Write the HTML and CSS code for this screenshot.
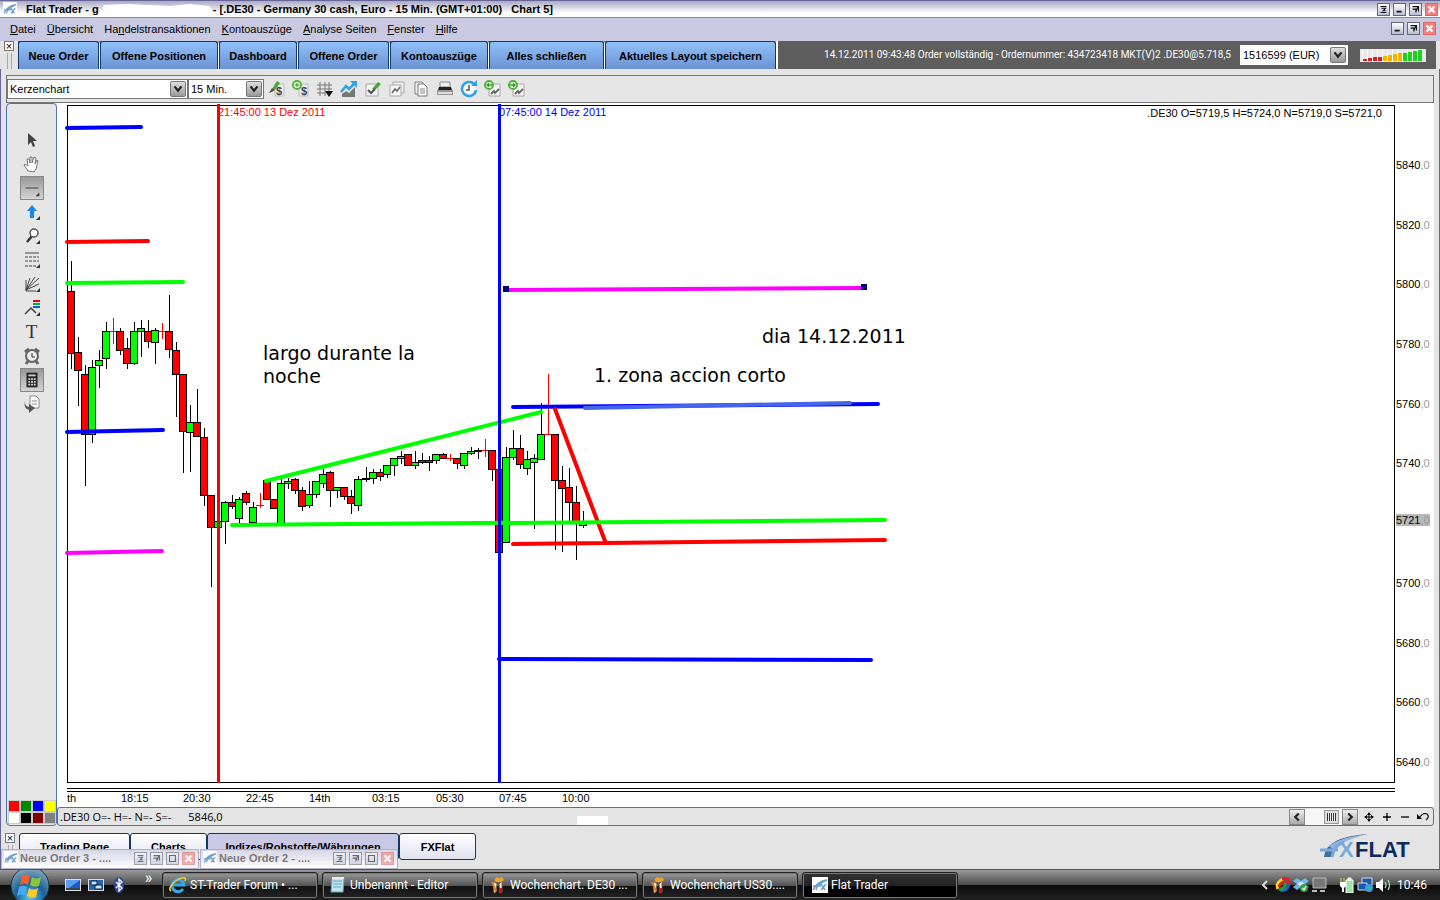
FILE: index.html
```html
<!DOCTYPE html>
<html lang="de">
<head>
    <meta charset="UTF-8">
    <title>Flat Trader</title>
    <link rel="stylesheet" href="styles.css">
</head>
<body>
    <svg class="sprite" aria-hidden="true">
        <symbol id="i-swoosh" viewBox="0 0 16 16"><path d="M1 13Q5 4 15 3Q10 5 8 7Q5 8 4 13M1 9h8M9 13l5-6M9 7l4 6" fill="none" stroke="#6ba0cc" stroke-width="1.5"/></symbol>
        <symbol id="i-down" viewBox="0 0 16 16"><path d="M4 5l4 5l4-5" fill="none" stroke="#222" stroke-width="2.5"/></symbol>
        <symbol id="i-shade" viewBox="0 0 13 13"><path d="M3 3h7M3 10h7M4 5h5L6 8h3" fill="none" stroke="#111" stroke-width="1.2"/></symbol>
        <symbol id="i-min" viewBox="0 0 13 13"><path d="M3 9h6" stroke="#111" stroke-width="2"/></symbol>
        <symbol id="i-rest" viewBox="0 0 13 13"><path d="M3 3h7v6M3 6h4v4M9 4L7 9" fill="none" stroke="#111" stroke-width="1.4"/></symbol>
        <symbol id="i-max" viewBox="0 0 13 13"><path d="M3 3h7v7H3z" fill="none" stroke="#111" stroke-width="1.3"/></symbol>
        <symbol id="i-x" viewBox="0 0 13 13"><path d="M3 3l7 7M10 3l-7 7" stroke="#fff" stroke-width="2.6"/></symbol>
        <symbol id="i-page" viewBox="0 0 18 18"><path d="M5 4h11v12H5z" fill="#f4f4f4" stroke="#aaa"/><path d="M7 14l3-3l1 2l4-4" stroke="#666" stroke-width="1.8" fill="none"/><circle cx="5" cy="5" r="4" fill="#fff" stroke="#4fb53a" stroke-width="2"/></symbol>
        <symbol id="i-book" viewBox="0 0 18 18"><path d="M4 5l4 3l-1 8l-2 1zM13 5l-3 3l1 9l2-1z" fill="#f2f2f2" stroke="#8a5a30"/><path d="M5 4l3-3l2 1l3-1l2 3l-3 2H7z" fill="#f0a030"/><path d="M3 6l4 9" stroke="#d87a28" stroke-width="2"/><path d="M10 12h3v5h-3z" fill="#d01818"/></symbol>
    </svg>

    <header class="titlebar">
        <svg class="app-icon"><use href="#i-swoosh"/></svg>
        <div class="title">
            <span>Flat Trader - g</span>
            <svg class="smudge" viewBox="0 0 114 18"><path d="M4 5L28 4L72 6L90 4L110 6L113 10L110 17L72 16L60 18L30 17L28 14L4 15z" fill="#fff"/></svg>
            <span>- [.DE30 - Germany 30 cash, Euro - 15 Min. (GMT+01:00) &nbsp; Chart 5]</span>
        </div>
        <div class="win-buttons">
            <button aria-label="Einrollen"><svg><use href="#i-shade"/></svg></button>
            <button aria-label="Minimieren"><svg><use href="#i-min"/></svg></button>
            <button aria-label="Wiederherstellen"><svg><use href="#i-rest"/></svg></button>
            <button class="close" aria-label="Beenden"><svg><use href="#i-x"/></svg></button>
        </div>
    </header>

    <nav class="menubar">
        <a href="#"><u>D</u>atei</a>
        <a href="#"><u>Ü</u>bersicht</a>
        <a href="#">Ha<u>n</u>delstransaktionen</a>
        <a href="#"><u>K</u>ontoauszüge</a>
        <a href="#"><u>A</u>nalyse Seiten</a>
        <a href="#"><u>F</u>enster</a>
        <a href="#"><u>H</u>ilfe</a>
        <div class="win-buttons">
            <button aria-label="Chart minimieren"><svg><use href="#i-min"/></svg></button>
            <button aria-label="Chart wiederherstellen"><svg><use href="#i-rest"/></svg></button>
            <button class="close" aria-label="Chart schließen"><svg><use href="#i-x"/></svg></button>
        </div>
    </nav>

    <div class="orderbar">
        <div class="grip"><button class="grip-x" aria-label="Leiste schließen">×</button><i></i></div>
        <div class="order-buttons">
            <button class="w-81">Neue Order</button>
            <button class="w-118">Offene Positionen</button>
            <button class="w-78">Dashboard</button>
            <button class="w-91">Offene Order</button>
            <button class="w-98">Kontoauszüge</button>
            <button class="w-115">Alles schließen</button>
            <button class="w-171">Aktuelles Layout speichern</button>
        </div>
        <p class="order-msg">14.12.2011 09:43:48 Order vollständig - Ordernummer: 434723418 MKT(V)2 .DE30@5.718,5</p>
        <div class="select account">
            <select aria-label="Konto"><option>1516599 (EUR)</option></select>
            <svg><use href="#i-down"/></svg>
        </div>
        <svg class="signal" id="signal" viewBox="0 0 66 13"></svg>
    </div>

    <div class="workspace">
        <div class="toolbar">
            <div class="select type">
                <select aria-label="Charttyp"><option>Kerzenchart</option></select>
                <svg><use href="#i-down"/></svg>
            </div>
            <div class="select period">
                <select aria-label="Periode"><option>15 Min.</option></select>
                <svg><use href="#i-down"/></svg>
            </div>
            <div class="tools">
                <button aria-label="Kauf zeichnen"><svg viewBox="0 0 18 18"><path d="M7 4h9v12H7z" fill="#f0f0f0" stroke="#bbb"/><path d="M4 9l5-8l3 2l-5 7z" fill="#49a83a"/><path d="M1 13l3-5l3 2l-3 2z" fill="#555"/><text x="8" y="15" class="dollar">$</text></svg></button>
                <button aria-label="Order hinzufügen"><svg viewBox="0 0 18 18"><path d="M7 4h9v12H7z" fill="#f0f0f0" stroke="#bbb"/><text x="9" y="15" class="dollar">$</text><circle cx="5" cy="5" r="4" fill="#fff" stroke="#4fb53a" stroke-width="2"/><path d="M5 3v4M3 5h4" stroke="#4fb53a" stroke-width="1.5"/></svg></button>
                <button aria-label="Raster"><svg viewBox="0 0 18 18"><path d="M4 2v14M9 2v14M13 2v9M1 5h15M1 9h15M1 13h9" stroke="#777"/><path d="M9 11h8l-4 6z" fill="#111"/></svg></button>
                <button aria-label="Indikator"><svg viewBox="0 0 18 18"><path d="M2 17v-3l4-3l3 2l6-6v10z" fill="#777"/><path d="M1 12l5-6l3 3l5-5" fill="none" stroke="#2ea2e6" stroke-width="2.5"/><path d="M10 1h7v7z" fill="#2ea2e6"/></svg></button>
                <button aria-label="Bearbeiten"><svg viewBox="0 0 18 18"><path d="M2 4h12v12H2z" fill="#f4f4f4" stroke="#aaa"/><path d="M8 9l6-7l3 2l-6 6z" fill="#3fa535"/><path d="M4 10l3 3l4-4" fill="none" stroke="#555" stroke-width="2"/></svg></button>
                <button aria-label="Charts kopieren"><svg viewBox="0 0 18 18"><path d="M5 2h11v11H5z" fill="#eee" stroke="#aaa"/><path d="M2 5h11v11H2z" fill="#f6f6f6" stroke="#aaa"/><path d="M4 13l3-4l2 2l3-4" fill="none" stroke="#666" stroke-width="1.5"/></svg></button>
                <button aria-label="Kopieren"><svg viewBox="0 0 18 18"><path d="M3 2h7l2 2v10H3z" fill="#eee" stroke="#888"/><path d="M6 4h6l3 3v9H6z" fill="#fff" stroke="#777"/><path d="M8 9h5M8 11h5M8 13h5" stroke="#888"/></svg></button>
                <button aria-label="Drucken"><svg viewBox="0 0 18 18"><path d="M4 2h10v5H4z" fill="#eee" stroke="#888"/><path d="M3 7h12l1 3H2z" fill="#222"/><path d="M1 10h16v5H1z" fill="#999"/><path d="M2 12h14v2H2z" fill="#ddd"/></svg></button>
                <button aria-label="Aktualisieren"><svg viewBox="0 0 18 18"><path d="M14 4A7 7 0 1 0 16 10" fill="#fff" stroke="#2ea2e6" stroke-width="2.5"/><path d="M11 6h6V0z" fill="#2ea2e6"/><path d="M9 5v5H6" fill="none" stroke="#555" stroke-width="1.5"/></svg></button>
                <button aria-label="Zurück"><svg viewBox="0 0 18 18"><use href="#i-page"/><path d="M8 5H3M5 3L3 5l2 2" fill="none" stroke="#3a9a2a" stroke-width="1.3"/></svg></button>
                <button aria-label="Vor"><svg viewBox="0 0 18 18"><use href="#i-page"/><path d="M2 5h5M5 3l2 2l-2 2" fill="none" stroke="#3a9a2a" stroke-width="1.3"/></svg></button>
            </div>
        </div>

        <div class="chart-area">
            <aside class="sidebar">
                <button aria-label="Zeiger"><svg viewBox="0 0 24 24"><path d="M8 5v12l3-3l2 5l2-1l-2-5h4z" fill="#444"/></svg></button>
                <button aria-label="Hand"><svg viewBox="0 0 24 24"><path d="M8 19l-4-6l1-1l3 2l-1-7l2 0l1 4V5h2v6l2-6l2 1l-1 6l2-4l1 1l-2 8l-2 3z" fill="#fff" stroke="#777"/></svg></button>
                <button class="on" aria-label="Linie"><svg viewBox="0 0 24 24"><path d="M5 12h14" stroke="#333"/><path d="M20 17v4h-4z" fill="#333"/></svg></button>
                <button aria-label="Pfeil"><svg viewBox="0 0 24 24"><path d="M12 5l5 6h-3v7h-4v-7H7z" fill="#1787e8"/><path d="M20 16v4h-4z" fill="#333"/></svg></button>
                <button aria-label="Lupe"><svg viewBox="0 0 24 24"><path d="M12 12l-5 6" stroke="#333" stroke-width="2.5"/><circle cx="14" cy="9" r="4" fill="#fff" stroke="#555" stroke-width="1.5"/><path d="M20 16v4h-4z" fill="#333"/></svg></button>
                <button aria-label="Fibonacci"><svg viewBox="0 0 24 24"><path d="M5 5h14" stroke="#444"/><path d="M5 9h14M5 13h14M5 18h12" stroke="#444" stroke-dasharray="3 1"/><path d="M20 16v4h-4z" fill="#333"/></svg></button>
                <button aria-label="Fächer"><svg viewBox="0 0 24 24"><path d="M6 8v11h10M6 18L10 6M6 18L15 5M6 18L19 6M6 18L19 12" fill="none" stroke="#444"/><path d="M20 16v4h-4z" fill="#333"/></svg></button>
                <button aria-label="Muster"><svg viewBox="0 0 24 24"><path d="M5 18l6-6l5 5" fill="none" stroke="#444" stroke-width="1.5"/><path d="M13 4h7v2h-7z" fill="#e00"/><path d="M13 7h7v2h-7z" fill="#1b9a50"/><path d="M13 10h7v2h-7z" fill="#06c"/><path d="M20 16v4h-4z" fill="#333"/></svg></button>
                <button class="text-tool">T</button>
                <button aria-label="Wecker"><svg viewBox="0 0 24 24"><circle cx="12" cy="12" r="6" fill="#eee" stroke="#666" stroke-width="2"/><path d="M5 8l4-3M19 8l-4-3M8 17l-2 3M16 17l2 3" stroke="#666" stroke-width="3"/><path d="M12 9v4h3" fill="none" stroke="#333"/></svg></button>
                <button class="on" aria-label="Rechner"><svg viewBox="0 0 24 24"><path d="M6 4h12v16H6z" fill="#222"/><path d="M8 6h8v2H8z" fill="#ccc"/><path d="M8 11h8M8 14h8M8 17h8" stroke="#ddd" stroke-width="2" stroke-dasharray="2 1"/></svg></button>
                <button aria-label="Export"><svg viewBox="0 0 24 24"><path d="M10 4h6l3 3v9h-9z" fill="#fff" stroke="#888"/><path d="M12 9h5M12 12h5" stroke="#888"/><path d="M5 9q-1 5 4 6v-3l6 4l-6 5v-3q-6-2-4-9z" fill="#555"/></svg></button>
                <div class="swatches">
                    <button class="c-red" aria-label="Rot"></button><button class="c-green" aria-label="Grün"></button><button class="c-blue" aria-label="Blau"></button><button class="c-yellow" aria-label="Gelb"></button>
                    <button class="c-white" aria-label="Weiß"></button><button class="c-black" aria-label="Schwarz"></button><button class="c-dark" aria-label="Dunkelrot"></button><button class="c-grey" aria-label="Grau"></button>
                </div>
            </aside>

            <main class="chart">
                <div class="plot-col">
                    <div class="plot"><span class="ohlc">.DE30 O=5719,5 H=5724,0 N=5719,0 S=5721,0</span></div>
                    <div class="splitter"></div>
                    <div class="times"></div>
                </div>
                <div class="prices" id="prices">
                    <span class="current">5721<i>,0</i></span>
                </div>
                <!-- Zeichenebene: Kerzen, Linien und Notizen -->
                <svg class="drawing">
                    <g transform="translate(-57 -103)">
                        <g id="candles" shape-rendering="crispEdges"></g>
                        <g class="lines">
                            <path d="M67 128L141 127M67 432L163 430M513 407L878 404M499 659L871 660" stroke="#00f"/>
                            <path d="M585 408L850 403" stroke="#4466ec"/>
                            <path d="M67 242L148 241M513 544L885 540M555 409L605 541" stroke="#f00"/>
                            <path d="M67 283L183 282M232 525L885 520M266 481L541 412" stroke="#0f0"/>
                            <path d="M67 553L162 551M506 290L864 288" stroke="#f0f"/>
                        </g>
                        <path d="M503 286h6v6h-6zM861 284h6v6h-6z" fill="#000080"/>
                        <path d="M217 104h3v679h-3z" fill="#f00"/>
                        <path d="M498 104h3v679h-3z" fill="#00f"/>
                        <text x="218" y="116" fill="#f00">21:45:00 13 Dez 2011</text>
                        <text x="499" y="116" fill="#00f">07:45:00 14 Dez 2011</text>
                        <g class="note">
                            <text x="263" y="360">largo durante la</text>
                            <text x="263" y="383">noche</text>
                            <text x="762" y="343">dia 14.12.2011</text>
                            <text x="594" y="382">1. zona accion corto</text>
                        </g>
                        <g id="times"></g>
                    </g>
                </svg>
            </main>

            <div class="statusbar">
                <span class="status-text">.DE30 O=- H=- N=- S=-</span>
                <span class="status-text">5846,0</span>
                <i class="patch"></i>
                <div class="scroller">
                    <button class="sb" aria-label="Links"><svg viewBox="0 0 16 16"><path d="M10 4L6 8l4 4" fill="none" stroke="#222" stroke-width="2.5"/></svg></button>
                    <span class="track"><i></i></span>
                    <button class="sb" aria-label="Rechts"><svg viewBox="0 0 16 16"><path d="M6 4l4 4l-4 4" fill="none" stroke="#222" stroke-width="2.5"/></svg></button>
                </div>
                <div class="zoomers">
                    <button aria-label="Verschieben"><svg viewBox="0 0 12 12"><path d="M6 2v8M2 6h8" stroke="#000"/><path d="M6 1l2 3H4zM6 11l2-3H4zM1 6l3-2v4zM11 6L8 4v4z"/></svg></button>
                    <button aria-label="Vergrößern"><svg viewBox="0 0 12 12"><path d="M6 2v8M2 6h8" stroke="#000" stroke-width="1.3"/></svg></button>
                    <button aria-label="Verkleinern"><svg viewBox="0 0 12 12"><path d="M2 6h8" stroke="#000" stroke-width="1.3"/></svg></button>
                    <button aria-label="Zurücksetzen"><svg viewBox="0 0 12 12"><path d="M2 7Q6 1 10 3Q13 6 9 9" fill="none" stroke="#000" stroke-width="1.2"/><path d="M0 3v5h5z"/></svg></button>
                </div>
            </div>
        </div>
    </div>

    <footer class="pages">
        <div class="grip"><button class="grip-x" aria-label="Leiste schließen">×</button><i></i></div>
        <button class="page w-111">Trading Page</button>
        <button class="page w-77">Charts</button>
        <button class="page active w-192">Indizes/Rohstoffe/Währungen</button>
        <button class="page w-77">FXFlat</button>
        <svg class="logo" viewBox="0 0 96 28">
            <path d="M5 24Q6 4 49 1Q19 6 12 24z" fill="#3f6f9f"/>
            <path d="M10 13Q22 4 49 1Q24 7 14 16z" fill="#8fb6e2"/>
            <path d="M1 17h18M13 24Q15 12 25 9" fill="none" stroke="#7aa9dc" stroke-width="3"/>
            <text x="20" y="24" fill="#7aa9dc">X</text>
            <text x="36" y="24" fill="#0b2c5c">FLAT</text>
        </svg>
        <div class="minimized">
            <div class="mini w-198"><svg class="app-icon"><use href="#i-swoosh"/></svg><span>Neue Order 3 - ....</span>
                <div class="win-buttons"><button aria-label="Einrollen"><svg><use href="#i-shade"/></svg></button><button aria-label="Wiederherstellen"><svg><use href="#i-rest"/></svg></button><button aria-label="Maximieren"><svg><use href="#i-max"/></svg></button><button class="close" aria-label="Schließen"><svg><use href="#i-x"/></svg></button></div>
            </div>
            <div class="mini w-198"><svg class="app-icon"><use href="#i-swoosh"/></svg><span>Neue Order 2 - ....</span>
                <div class="win-buttons"><button aria-label="Einrollen"><svg><use href="#i-shade"/></svg></button><button aria-label="Wiederherstellen"><svg><use href="#i-rest"/></svg></button><button aria-label="Maximieren"><svg><use href="#i-max"/></svg></button><button class="close" aria-label="Schließen"><svg><use href="#i-x"/></svg></button></div>
            </div>
        </div>
    </footer>

    <div class="taskbar">
        <button class="start" aria-label="Start"><svg viewBox="0 0 40 32">
            <defs><radialGradient id="orb" cx="50%" cy="80%" r="75%"><stop offset="0" stop-color="#4fd0f0"/><stop offset=".5" stop-color="#1b5f96"/><stop offset="1" stop-color="#7fa4bc"/></radialGradient></defs>
            <circle cx="20" cy="16" r="19" fill="url(#orb)" stroke="#133" />
            <path d="M12 6q4-3 8 0l-2 9q-4-3-8 0z" fill="#f0602c"/><path d="M22 7q4 3 9 0l-2 9q-5 2-9-1z" fill="#8cc63e"/>
            <path d="M9 17q4-3 8 0l-2 9q-4-3-8 0z" fill="#4aa8ec"/><path d="M19 18q4 3 9 0l-2 9q-5 2-9-1z" fill="#fcc92e"/>
        </svg></button>
        <div class="quick">
            <button aria-label="Desktop"><svg viewBox="0 0 16 16"><path d="M0 2h16v12H0z" fill="#ddd"/><path d="M1 3h14v8H1z" fill="#1c58c8"/><path d="M1 3h14L4 11H1z" fill="#5a9cf0"/><path d="M1 11h14v2H1z" fill="#345"/></svg></button>
            <button aria-label="Fenster wechseln"><svg viewBox="0 0 16 16"><path d="M0 2h16v12H0z" fill="#ddd"/><path d="M1 3h14v10H1z" fill="#2468b0"/><path d="M3 4h6v4H3zM7 8h7v4H7z" fill="#bfe0ff" stroke="#123"/></svg></button>
            <button aria-label="Bluetooth"><svg viewBox="0 0 16 16"><ellipse cx="8" cy="8" rx="5" ry="8" fill="#2a4a9c"/><path d="M5 5l6 6l-3 3V2l3 3l-6 6" fill="none" stroke="#fff" stroke-width="1.3"/></svg></button>
        </div>
        <button class="more">»</button>
        <div class="tasks">
            <button><svg viewBox="0 0 18 18"><path d="M14 13A6 6 0 1 1 15 9H4" fill="none" stroke="#35a9ea" stroke-width="3"/><path d="M2 15Q-2 12 8 4Q18-1 16 5" fill="none" stroke="#f4c430" stroke-width="1.6"/></svg>ST-Trader Forum • ...</button>
            <button><svg viewBox="0 0 18 18"><path d="M3 2h12l-1 14H2z" fill="#bfe4ef" stroke="#6aa"/><path d="M4 5h9M4 8h9M4 11h8" stroke="#69a8c0"/><path d="M3 2h12" stroke="#eee" stroke-width="2"/></svg>Unbenannt - Editor</button>
            <button><svg><use href="#i-book"/></svg>Wochenchart. DE30 ...</button>
            <button><svg><use href="#i-book"/></svg>Wochenchart US30....</button>
            <button class="current-task"><svg class="tile"><use href="#i-swoosh"/></svg>Flat Trader</button>
        </div>
        <div class="tray">
            <svg viewBox="0 0 16 16"><path d="M10 4L6 8l4 4" fill="none" stroke="#ddd" stroke-width="2"/></svg>
            <svg viewBox="0 0 16 16"><g fill="none" stroke-width="3"><path d="M3 12Q0 6 8 2" stroke="#f4d820"/><path d="M7 2Q15 0 14 8" stroke="#e02020"/><path d="M14 7Q12 15 5 13" stroke="#2060e0"/><path d="M4 10Q6 4 12 6" stroke="#e02020"/><path d="M4 12Q9 13 11 6" stroke="#20a030"/></g></svg>
            <svg viewBox="0 0 16 16"><path d="M4 1l4 3l-4 3L0 4zM12 1l4 3l-4 3l-4-3zM4 7l4 3l-4 3l-4-3zM12 7l4 3l-4 3l-4-3z" fill="#6fb8f0"/><path d="M8 4l4 3l-4 3l-4-3z" fill="#d8ecfc"/><circle cx="11" cy="11" r="4" fill="#2ea040"/><path d="M9 11l2 2l2-4" fill="none" stroke="#fff" stroke-width="1.3"/></svg>
            <svg class="gap-after" viewBox="0 0 16 16"><path d="M2 1h13v10H2z" fill="#777" stroke="#bbb"/><path d="M1 13h5v2H1zM9 13h5v2H9z" fill="#bbb"/></svg>
            <svg viewBox="0 0 16 16"><path d="M7 3h7v13H7zM9 1h3v2H9z" fill="#9fe0a8" stroke="#fff"/><path d="M1 5h6v4l-2 2v4H3v-4L1 9z" fill="#fff"/><path d="M2 1v4M5 1v4" stroke="#f4d820"/></svg>
            <svg viewBox="0 0 16 16"><path d="M5 1h10v8H5z" fill="#1858b0" stroke="#ddd"/><path d="M1 6h9v7H1z" fill="#1858b0" stroke="#ddd"/><circle cx="12" cy="11" r="4" fill="#3a9ae8"/><path d="M10 9l4 1l-2 4z" fill="#3fbf50"/></svg>
            <svg viewBox="0 0 16 16"><path d="M1 5h3l4-4v14l-4-4H1z" fill="#fff"/><path d="M10 5q2 3 0 6M13 3q3 5 0 10" fill="none" stroke="#9fe0b0" stroke-width="1.3"/></svg>
            <time>10:46</time>
        </div>
    </div>
    <script src="chart.js"></script>
</body>
</html>
```
FILE: styles.css
```css
:root {
    --panel: #e4e4e4;
    --edge: #4a76ad;
    --navy: #103868;
}

* {
    box-sizing: border-box;
}

body {
    margin: 0;
    height: 100vh;
    display: flex;
    flex-direction: column;
    overflow: hidden;
    background: var(--panel);
    font: 11px/14px "Liberation Sans", Arial, sans-serif;
    color: #000;
}

button {
    font: inherit;
    color: inherit;
    padding: 0;
    border: 0;
    background: none;
}

svg {
    flex: none;
}

.sprite {
    position: absolute;
    width: 0;
    height: 0;
}

/* Titel und Menü */
.titlebar {
    height: 17px;
    flex: none;
    display: flex;
    align-items: center;
    padding: 0 2px 0 3px;
    border-top: 1px solid #65659a;
    background: linear-gradient(#a9a9c2, #fff 75%);
}

.app-icon {
    width: 14px;
    height: 14px;
    background: #fff;
}

.title {
    flex: 1;
    display: flex;
    align-items: center;
    padding-left: 9px;
    font-weight: bold;
    white-space: nowrap;
}

.smudge {
    width: 114px;
    height: 18px;
    margin: -2px 0;
}

.win-buttons {
    display: flex;
    gap: 3px;
    margin-left: auto;
}

.win-buttons button {
    width: 13px;
    height: 13px;
    border: 1px solid #667;
    background: linear-gradient(#fff, #b9bfd4);
}

.win-buttons svg {
    display: block;
    width: 11px;
    height: 11px;
}

.win-buttons .close {
    border-color: #d66;
    background: #f4807c;
}

.menubar {
    height: 24px;
    flex: none;
    display: flex;
    align-items: center;
    gap: 11px;
    padding: 0 4px 2px 10px;
    border-top: 1px solid #889;
    background: #c9c9e2;
}

.menubar a {
    color: #000;
    text-decoration: none;
}

/* Orderleiste */
.orderbar {
    height: 28px;
    flex: none;
    display: flex;
    align-items: center;
    margin-right: 4px;
    background: #5e5e5e;
}

.grip {
    width: 18px;
    height: 100%;
    padding: 0 4px;
    background: var(--panel);
}

.grip-x {
    display: block;
    width: 10px;
    height: 10px;
    border: 1px solid #777;
    background: #fff;
    line-height: 8px;
}

.grip i {
    display: block;
    width: 5px;
    height: 16px;
    margin: 2px 3px;
    border: solid #aaa;
    border-width: 0 1px;
}

.order-buttons {
    display: flex;
    height: 28px;
    border-right: 2px solid #fff;
}

.order-buttons button {
    border: solid var(--navy);
    border-width: 1px 1px 0;
    margin-right: 1px;
    border-radius: 3px 3px 0 0;
    background: linear-gradient(#90c0fa, #6c93d2);
    box-shadow: 1px 0 #fff;
    font-weight: bold;
    white-space: nowrap;
}

.order-buttons button:last-child {
    margin-right: 0;
}

.w-77 { width: 77px; }
.w-78 { width: 78px; }
.w-81 { width: 81px; }
.w-91 { width: 91px; }
.w-98 { width: 98px; }
.w-111 { width: 111px; }
.w-115 { width: 115px; }
.w-118 { width: 118px; }
.w-171 { width: 171px; }
.w-192 { width: 192px; }
.w-198 { width: 198px; }

.order-msg {
    flex: 1;
    margin: 0 9px 0 0;
    text-align: right;
    color: #fff;
    font: 10px/14px Roboto, sans-serif;
    white-space: nowrap;
}

.select {
    position: relative;
}

.select select {
    appearance: none;
    width: 100%;
    height: 20px;
    padding: 0 2px;
    border: 1px solid #777;
    border-radius: 0;
    background: #fff;
    color: #000;
    font: inherit;
}

.select svg {
    position: absolute;
    top: 2px;
    right: 2px;
    width: 16px;
    height: 16px;
    border: 1px solid #777;
    border-radius: 2px;
    background: linear-gradient(#ddd, #999);
    pointer-events: none;
}

.account {
    width: 108px;
}

.account select {
    border-color: #fff;
}

.signal {
    width: 66px;
    height: 13px;
    margin: 0 10px 0 12px;
}

/* Arbeitsbereich */
.workspace {
    flex: 1;
    min-height: 0;
    display: flex;
    flex-direction: column;
    padding: 6px 5px 0;
    border: solid #65659a;
    border-width: 0 1px;
}

.toolbar {
    height: 28px;
    flex: none;
    display: flex;
    align-items: center;
    border: 1px solid #777;
    background: #e6e6e6;
}

.type {
    width: 181px;
}

.period {
    width: 76px;
}

.tools {
    display: flex;
    gap: 6px;
    padding-left: 4px;
}

.tools button,
.tools button > svg {
    display: block;
    width: 18px;
    height: 18px;
}

.dollar {
    font: bold 11px "Liberation Sans", sans-serif;
    fill: #444;
}

.chart-area {
    flex: 1;
    min-height: 0;
    display: grid;
    grid-template-columns: 51px minmax(0, 1fr);
    grid-template-rows: minmax(0, 1fr) 19px;
}

.sidebar {
    grid-row: 1 / 3;
    display: flex;
    flex-direction: column;
    align-items: center;
    padding: 24px 0 1px;
    border: 1px solid var(--edge);
    border-radius: 4px;
    background: #e6e6e6;
}

.sidebar > button {
    width: 24px;
    height: 24px;
    flex: none;
}

.sidebar > button svg {
    display: block;
    width: 100%;
    height: 100%;
}

.sidebar .on {
    border: 1px solid #888;
    background: linear-gradient(#999, #d4d4d4);
}

.text-tool {
    font: 19px/24px "Liberation Serif", serif;
    color: #333;
}

.swatches {
    margin-top: auto;
    display: grid;
    grid-template-columns: repeat(4, 12px);
    grid-auto-rows: 12px;
}

.swatches button {
    border: 1px solid #fff;
    outline: 1px solid #ccc;
    outline-offset: -1px;
}

.c-red { background: #f00; }
.c-green { background: #080; }
.c-blue { background: #00f; }
.c-yellow { background: #ff0; }
.c-white { background: #fff; }
.c-black { background: #000; }
.c-dark { background: #800000; }
.c-grey { background: #808080; }

.chart {
    position: relative;
    display: flex;
    padding: 2px 0 0 10px;
    background: #fff;
}

.plot-col {
    flex: 1;
    display: flex;
    flex-direction: column;
}

.plot {
    flex: 1;
    padding: 0 12px;
    border: 1px solid #000;
    text-align: right;
}

.splitter {
    height: 4px;
    margin-top: 5px;
    border: solid #000;
    border-width: 1px 0;
}

.times {
    height: 15px;
}

.prices {
    position: relative;
    width: 39px;
    display: flex;
    flex-direction: column;
    justify-content: space-between;
    padding: 53px 0 38px 1px;
}

.prices > span {
    min-height: 14px;
}

.prices i {
    color: #999;
    font-style: normal;
}

.prices .current {
    position: absolute;
    top: 409px;
    left: 1px;
    min-height: 12px;
    line-height: 12px;
    background: #b8b8b8;
}

.drawing {
    position: absolute;
    inset: 0;
    width: 100%;
    height: 100%;
    pointer-events: none;
}

.drawing .lines {
    fill: none;
    stroke-width: 4px;
    stroke-linecap: round;
}

.note text {
    font: 19px "DejaVu Sans", Verdana, sans-serif;
}

.statusbar {
    display: flex;
    align-items: center;
    gap: 17px;
    padding: 0 4px 0 2px;
    border: 1px solid var(--edge);
    border-radius: 3px;
}

.status-text {
    font: 11px/14px "Open Sans", sans-serif;
}

.patch {
    width: 31px;
    height: 9px;
    margin: 8px 0 0 337px;
    background: #fff;
}

.scroller {
    display: flex;
    align-items: center;
    margin-left: auto;
}

.sb {
    width: 16px;
    height: 16px;
    border: 1px solid #888;
    background: linear-gradient(#eee, #aaa);
}

.sb svg {
    display: block;
    width: 14px;
    height: 14px;
}

.track {
    width: 37px;
    height: 16px;
    padding: 1px 3px;
    background: #f7f7f7;
}

.track i {
    display: block;
    width: 15px;
    height: 14px;
    margin-left: auto;
    border: 3px solid #ddd;
    outline: 1px solid #999;
    outline-offset: -1px;
    background: repeating-linear-gradient(90deg, #333 0 1px, #eee 1px 2px);
}

.zoomers {
    display: flex;
    gap: 6px;
    margin-left: -12px;
}

.zoomers button,
.zoomers svg {
    display: block;
    width: 12px;
    height: 12px;
}

/* Seitenreiter */
.pages {
    position: relative;
    height: 43px;
    flex: none;
    display: flex;
    align-items: flex-start;
    padding-top: 7px;
    border: solid #65659a;
    border-width: 0 1px;
}

.page {
    height: 27px;
    border: 1px solid var(--navy);
    border-radius: 3px;
    background: linear-gradient(#fff, #e2e2f0);
    font-weight: bold;
    white-space: nowrap;
}

.page.active {
    background: #c9c9e6;
}

.logo {
    width: 96px;
    height: 28px;
    margin: 0 24px 0 auto;
}

.logo text {
    font: bold 22px "Liberation Sans", sans-serif;
}

.minimized {
    position: absolute;
    left: 0;
    bottom: 0;
    display: flex;
    gap: 1px;
}

.mini {
    height: 20px;
    display: flex;
    align-items: center;
    gap: 2px;
    padding: 0 3px 2px 2px;
    border: 1px solid #b0b0c8;
    background: linear-gradient(#d8d8e8, #fff);
    opacity: 0.96;
    font-weight: bold;
    color: #777;
}

.mini .win-buttons {
    opacity: 0.6;
}

/* Taskleiste */
.taskbar {
    height: 31px;
    flex: none;
    display: flex;
    align-items: center;
    border-top: 1px solid #555;
    background: linear-gradient(#999, #4a4a4a 50%, #0a0a0a 50%, #222);
    color: #fff;
    font: 12px/16px Roboto, sans-serif;
}

.start {
    width: 40px;
    height: 30px;
    margin: 0 15px 0 10px;
    overflow: hidden;
}

.start svg {
    width: 40px;
    height: 32px;
}

.quick {
    display: flex;
    gap: 7px;
}

.quick button,
.quick svg,
.tray svg {
    display: block;
    width: 16px;
    height: 16px;
}

.more {
    width: 35px;
    padding-left: 8px;
    font-size: 16px;
    line-height: 24px;
    align-self: flex-start;
    margin-top: -4px;
}

.tasks {
    flex: 1;
    min-width: 0;
    display: flex;
    gap: 4px;
}

.tasks button {
    width: 156px;
    height: 27px;
    display: flex;
    align-items: center;
    gap: 3px;
    padding-left: 6px;
    border: 1px solid #222;
    border-radius: 3px;
    box-shadow: inset 0 0 0 1px #777;
    background: linear-gradient(#999, #555 50%, #111 50%, #222);
    white-space: nowrap;
}

.tasks .current-task {
    padding-left: 9px;
    background: linear-gradient(#333, #222 50%, #000 50%);
}

.tasks svg {
    width: 18px;
    height: 18px;
}

.tasks .tile {
    width: 16px;
    height: 16px;
    background: #fff;
}

.tray {
    display: flex;
    align-items: center;
    gap: 2px;
    padding-right: 13px;
}

.tray .gap-after {
    margin-right: 10px;
}

.tray time {
    margin-left: 4px;
}
```
FILE: chart.js
```js
// Farbe, Hoch, Körper oben, Körper unten, Tief (eine Kerze alle 7px)
const candles = [
    ['r', 261, 291, 353, 368], ['r', 337, 352, 370, 405], ['r', 365, 374, 434, 485],
    ['g', 360, 367, 434, 442], ['g', 350, 360, 365, 387], ['g', 322, 331, 358, 368],
    ['x', 318, 331, 331, 343], ['r', 328, 331, 350, 354], ['r', 338, 348, 363, 368],
    ['g', 322, 331, 363, 364], ['g', 320, 328, 331, 356], ['r', 320, 331, 341, 347],
    ['g', 328, 330, 342, 363], ['x', 323, 331, 331, 338], ['r', 295, 331, 349, 357],
    ['r', 342, 350, 374, 416], ['r', 374, 374, 431, 472], ['g', 405, 422, 432, 471],
    ['r', 389, 422, 436, 436], ['r', 428, 437, 495, 505], ['r', 495, 495, 527, 586],
    ['g', 521, 521, 527, 527], ['g', 501, 502, 521, 543], ['r', 495, 502, 506, 508],
    ['g', 497, 499, 518, 522], ['r', 491, 493, 502, 504], ['g', 502, 507, 522, 522],
    ['x', 493, 505, 505, 507], ['r', 480, 480, 499, 499], ['r', 499, 499, 508, 508],
    ['g', 479, 483, 523, 523], ['g', 478, 481, 483, 488], ['r', 478, 479, 490, 493],
    ['r', 487, 490, 506, 510], ['g', 481, 494, 505, 507], ['g', 481, 481, 494, 497],
    ['g', 469, 474, 483, 487], ['r', 471, 472, 490, 506], ['g', 487, 487, 490, 497],
    ['r', 487, 487, 496, 499], ['r', 490, 496, 503, 513], ['g', 476, 479, 505, 510],
    ['g', 467, 478, 479, 481], ['g', 469, 472, 478, 483], ['r', 469, 472, 476, 480],
    ['g', 465, 465, 474, 477], ['g', 458, 458, 465, 475], ['g', 451, 456, 458, 463],
    ['r', 454, 454, 465, 465], ['g', 451, 462, 465, 468], ['r', 453, 460, 462, 463],
    ['r', 456, 460, 462, 470], ['g', 454, 454, 460, 463], ['r', 453, 454, 458, 458],
    ['x', 454, 458, 458, 460], ['r', 458, 458, 463, 468], ['g', 453, 453, 465, 468],
    ['g', 447, 451, 453, 454], ['g', 448, 450, 451, 458], ['x', 439, 450, 450, 456],
    ['r', 450, 450, 469, 480], ['r', 469, 469, 552, 552], ['g', 447, 457, 542, 542],
    ['g', 430, 448, 457, 459], ['r', 435, 448, 464, 468], ['g', 451, 459, 468, 474],
    ['g', 454, 458, 462, 528], ['g', 403, 434, 459, 459], ['x', 374, 434, 434, 434],
    ['r', 434, 434, 480, 549], ['r', 466, 480, 488, 551], ['r', 468, 487, 502, 523],
    ['r', 486, 502, 522, 559], ['g', 511, 523, 525, 527]
];

const fills = { r: '#f00', g: '#0f0' };

function rect(x, y, w, h, fill) {
    return `<rect x="${x}" y="${y}" width="${w}" height="${h}" fill="${fill}"/>`;
}

document.getElementById('candles').innerHTML = candles.map(([c, hi, top, bot, lo], i) => {
    const x = Math.round(71 + i * 7.012);
    if (c === 'x') {
        return rect(x, hi, 1, lo - hi + 1, '#f00') + rect(x - 4, top, 8, 1, '#f00');
    }
    return rect(x, hi, 1, lo - hi + 1, '#000')
        + rect(x - 4, top, 8, bot - top + 1, '#000')
        + rect(x - 3, top + 1, 6, Math.max(bot - top - 1, 0), fills[c]);
}).join('');

// Zeitachse
const times = [[67, 'th'], [121, '18:15'], [183, '20:30'], [246, '22:45'], [309, '14th'],
    [372, '03:15'], [436, '05:30'], [499, '07:45'], [562, '10:00']];
document.getElementById('times').innerHTML =
    times.map(([x, t]) => `<text x="${x}" y="802">${t}</text>`).join('');

// Preisachse, 5720 liegt unter dem aktuellen Kurs und bleibt leer
const prices = document.getElementById('prices');
for (let p = 5840; p >= 5640; p -= 20) {
    const label = p === 5720 ? '' : `${p}<i>,0</i>`;
    prices.insertAdjacentHTML('beforeend', `<span>${label}</span>`);
}

// Signalstärke
const colors = ['#d42020', '#f4b400', '#20d020'];
let bars = rect(0, 0, 66, 13, '#e8e8e8');
for (let i = 0; i < 12; i++) {
    const h = 2 + Math.round(i * 0.8);
    bars += rect(3 + i * 5, 12 - h, 4, h, colors[Math.floor(i / 4)]) + rect(2 + i * 5, 1, 1, 11, '#fff');
}
document.getElementById('signal').innerHTML = bars;
```
